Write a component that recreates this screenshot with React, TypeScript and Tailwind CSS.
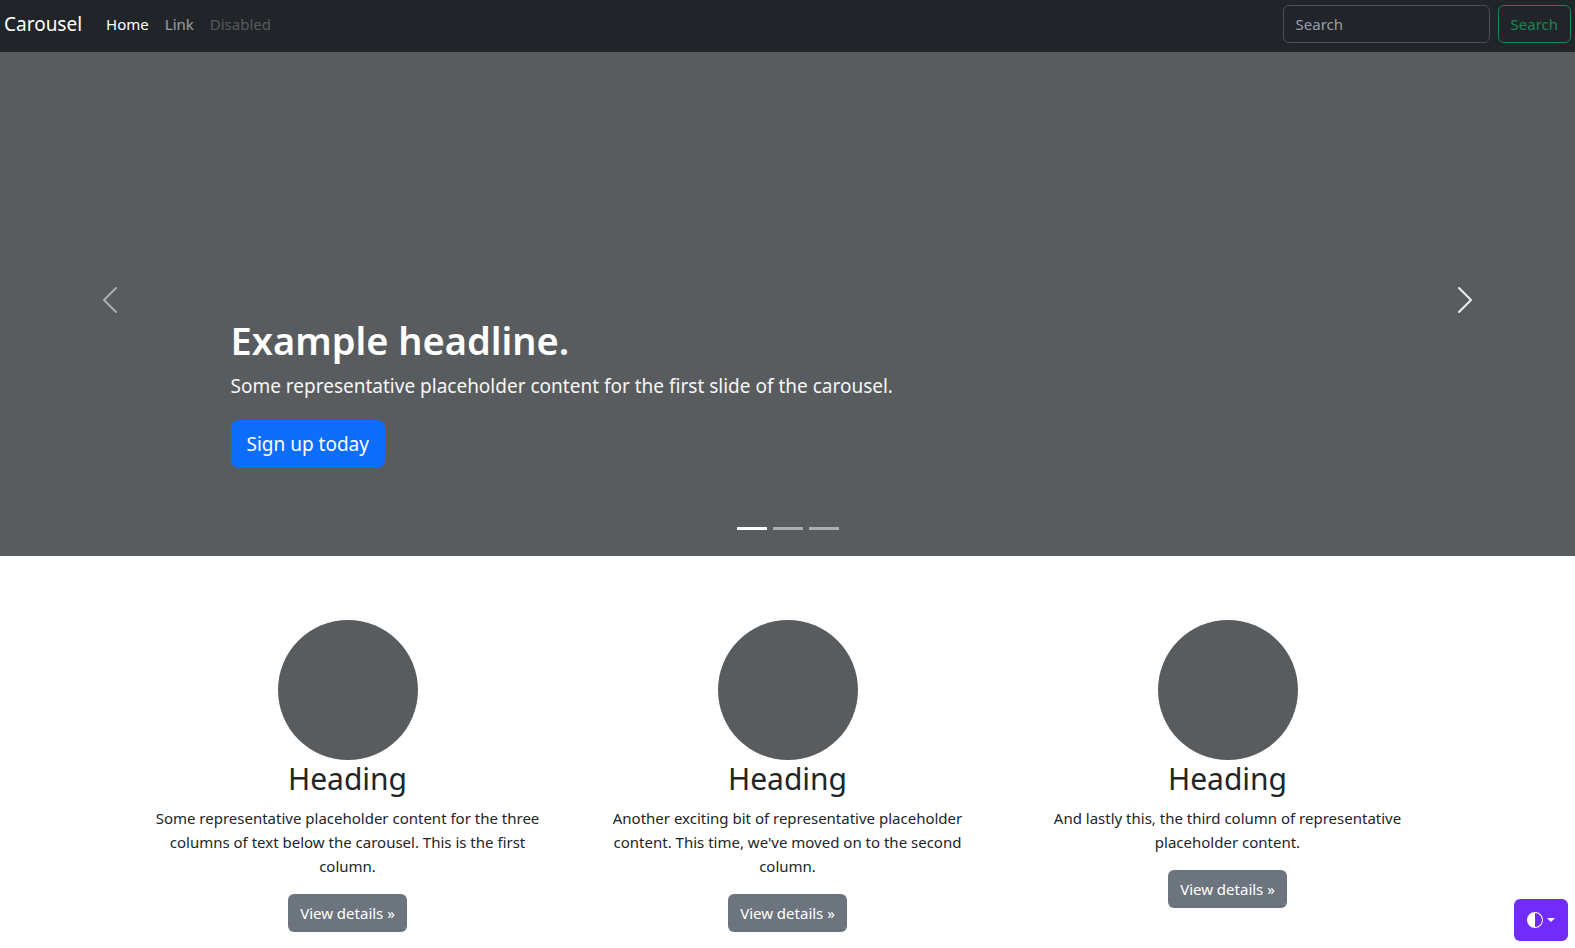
import { useState } from "react";

const columns = [
  {
    id: "first",
    text: "Some representative placeholder content for the three columns of text below the carousel. This is the first column.",
  },
  {
    id: "second",
    text: "Another exciting bit of representative placeholder content. This time, we've moved on to the second column.",
  },
  {
    id: "third",
    text: "And lastly this, the third column of representative placeholder content.",
  },
];

function Navbar() {
  return (
    <header className="fixed inset-x-0 top-0 z-20 flex items-center justify-between bg-[#212529] px-1 pt-[5px] pb-[9px]">
      <nav className="flex items-center" aria-label="Main">
        <a href="#" className="mr-4 text-[19px] leading-[30px] text-white">
          Carousel
        </a>
        <ul className="flex">
          <li>
            <a href="#" aria-current="page" className="px-2 text-white">
              Home
            </a>
          </li>
          <li>
            <a href="#" className="px-2 text-white/55">
              Link
            </a>
          </li>
          <li>
            <a aria-disabled="true" className="px-2 text-white/25">
              Disabled
            </a>
          </li>
        </ul>
      </nav>
      <form className="flex gap-2" role="search" onSubmit={(e) => e.preventDefault()}>
        <input
          type="search"
          aria-label="Search"
          placeholder="Search"
          className="h-[38px] w-[207px] rounded-md border border-[#495057] bg-[#212529] px-3 text-[#dee2e6] placeholder:text-[#dee2e6]/65"
        />
        <button
          type="submit"
          className="h-[38px] rounded-md border border-[#198754] px-3 text-[#198754]"
        >
          Search
        </button>
      </form>
    </header>
  );
}

function Carousel() {
  const [active, setActive] = useState(0);
  const move = (step: number) => setActive((active + step + 3) % 3);
  return (
    <section className="relative flex h-128 flex-col justify-end bg-[#595c5f]" aria-label="Carousel">
      <div className="mx-auto w-full max-w-[1320px] px-[103px] pb-[88px] text-[19px] leading-7 text-white">
        <h1 className="mb-2 text-[38px] leading-12 font-semibold">Example headline.</h1>
        <p className="mb-5 opacity-95">
          Some representative placeholder content for the first slide of the carousel.
        </p>
        <a
          href="#"
          className="inline-flex h-12 items-center rounded-lg bg-[#0d6efd] px-4 align-top"
        >
          Sign up today
        </a>
      </div>
      <button
        type="button"
        aria-label="Previous"
        onClick={() => move(-1)}
        className="absolute inset-y-0 left-0 flex w-[14%] items-center justify-center text-white opacity-50"
      >
        <svg className="size-8" viewBox="0 0 16 16" fill="currentColor" aria-hidden="true">
          <path d="M11.354 1.646a.5.5 0 0 1 0 .708L5.707 8l5.647 5.646a.5.5 0 0 1-.708.708l-6-6a.5.5 0 0 1 0-.708l6-6a.5.5 0 0 1 .708 0z" />
        </svg>
      </button>
      <button
        type="button"
        aria-label="Next"
        onClick={() => move(1)}
        className="absolute inset-y-0 right-0 flex w-[14%] items-center justify-center text-white opacity-90"
      >
        <svg className="size-8" viewBox="0 0 16 16" fill="currentColor" aria-hidden="true">
          <path d="M4.646 1.646a.5.5 0 0 1 .708 0l6 6a.5.5 0 0 1 0 .708l-6 6a.5.5 0 0 1-.708-.708L10.293 8 4.646 2.354a.5.5 0 0 1 0-.708z" />
        </svg>
      </button>
      <div className="absolute inset-x-0 bottom-[26px] flex justify-center gap-[6px]">
        {[0, 1, 2].map((i) => (
          <button
            key={i}
            type="button"
            aria-label={`Slide ${i + 1}`}
            onClick={() => setActive(i)}
            className={i === active ? "h-[3px] w-[30px] bg-white" : "h-[3px] w-[30px] bg-white/50"}
          />
        ))}
      </div>
    </section>
  );
}

function ThemeButton() {
  return (
    <button
      type="button"
      aria-label="Toggle theme"
      className="fixed right-[7px] bottom-[7px] z-20 flex h-[42px] items-center gap-1 rounded-md bg-[#712cf9] px-[13px] text-white"
    >
      <svg className="size-4" viewBox="0 0 16 16" fill="currentColor" aria-hidden="true">
        <path d="M8 15A7 7 0 1 0 8 1v14zm0 1A8 8 0 1 1 8 0a8 8 0 0 1 0 16z" />
      </svg>
      <svg className="h-1 w-2" viewBox="0 0 8 4" fill="currentColor" aria-hidden="true">
        <path d="M0 0h8L4 4z" />
      </svg>
    </button>
  );
}

export default function App() {
  return (
    <div className="h-screen overflow-hidden bg-white font-['Noto_Sans',sans-serif] text-[15px] leading-6 text-[#212529]">
      <Navbar />
      <main className="pt-11">
        <Carousel />
        <div className="mx-auto mt-16 grid max-w-[1320px] grid-cols-3 text-center">
          {columns.map((column) => (
            <section key={column.id} className="px-6">
              <div className="mx-auto size-[140px] rounded-full bg-[#595c5f]" />
              <h2 className="mb-2 text-[30px] leading-[38px]">Heading</h2>
              <p className="mb-4">{column.text}</p>
              <a
                href="#"
                className="inline-flex h-[38px] items-center rounded-md bg-[#6c757d] px-3 text-white"
              >
                View details »
              </a>
            </section>
          ))}
        </div>
      </main>
      <ThemeButton />
    </div>
  );
}
